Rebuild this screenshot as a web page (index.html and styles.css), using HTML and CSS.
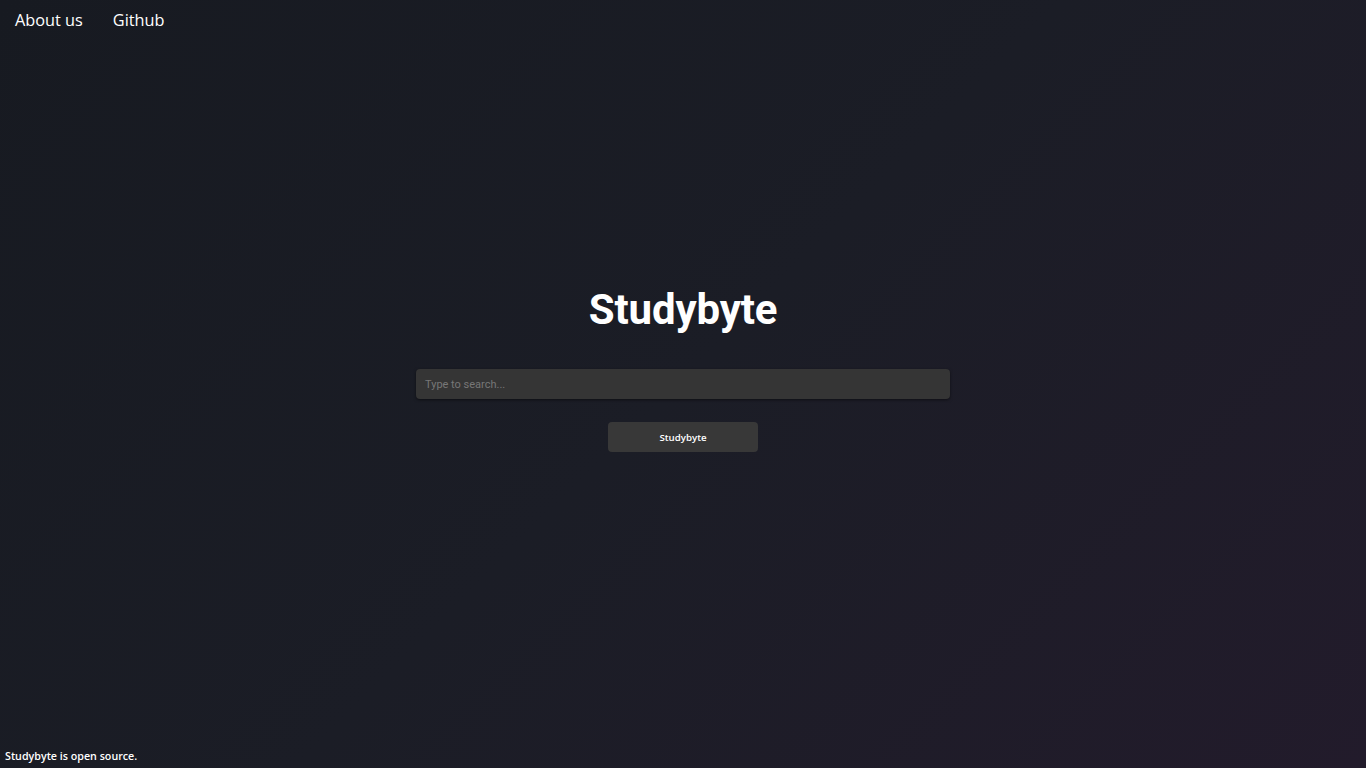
FILE: index.html
```html
<!DOCTYPE html>
<html lang="en">
<head>
<meta charset="utf-8">
<title>Studybyte</title>
<link rel="stylesheet" href="styles.css">
</head>
<body>
<nav class="nav">
  <a class="nav-link" href="#">About us</a>
  <a class="nav-link" href="#">Github</a>
</nav>
<main class="main">
  <h1 class="title">Studybyte</h1>
  <input class="search" type="text" placeholder="Type to search...">
  <button class="btn">Studybyte</button>
</main>
<footer class="footer">Studybyte is open source.</footer>
</body>
</html>
```
FILE: styles.css
```css
html, body {
  margin: 0;
  height: 100%;
}
body {
  background: linear-gradient(135deg, #171a21 0%, #1b1d26 50%, #221b2b 100%);
  color: #fff;
  font-family: "Open Sans", "Noto Sans", sans-serif;
  display: flex;
  flex-direction: column;
  overflow: hidden;
}
.nav {
  display: flex;
  gap: 30px;
  padding: 8px 15px 0;
}
.nav-link {
  color: #fff;
  text-decoration: none;
  font-size: 16.3px;
  line-height: 24px;
}
.main {
  flex: 1;
  display: flex;
  flex-direction: column;
  align-items: center;
  padding-top: 250px;
}
.title {
  margin: 0;
  font-family: Roboto, sans-serif;
  font-weight: 700;
  font-size: 42px;
  line-height: 56px;
  letter-spacing: -0.15px;
}
.search {
  margin-top: 31px;
  width: 534px;
  height: 30px;
  box-sizing: border-box;
  background: #353535;
  border: none;
  border-radius: 4px;
  box-shadow: 0 1px 3px rgba(0,0,0,0.5);
  padding: 0 9px;
  color: #ddd;
  font-family: Roboto, sans-serif;
  font-size: 11px;
  outline: none;
}
.search::placeholder {
  color: #777;
}
.btn {
  margin-top: 23px;
  width: 150px;
  height: 30px;
  background: #383838;
  border: none;
  border-radius: 4px;
  color: #fff;
  font-family: "Open Sans", "Noto Sans", sans-serif;
  font-weight: 600;
  font-size: 9.7px;
}
.footer {
  padding: 0 5px 4px;
  font-size: 10.7px;
  font-weight: 600;
  line-height: 15px;
}
```
